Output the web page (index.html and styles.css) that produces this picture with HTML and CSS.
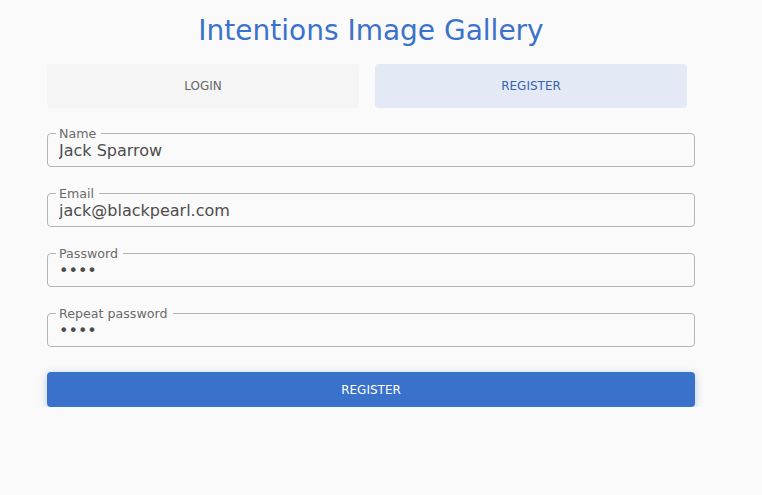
FILE: index.html
```html
<!DOCTYPE html>
<html lang="en">
<head>
<meta charset="utf-8">
<title>Intentions Image Gallery</title>
<link rel="stylesheet" href="styles.css">
</head>
<body>
<main class="page">
  <h1 class="title">Intentions Image Gallery</h1>
  <div class="tabs">
    <button class="tab" type="button">LOGIN</button>
    <button class="tab tab-active" type="button">REGISTER</button>
  </div>
  <form class="form">
    <fieldset class="field">
      <legend class="field-label">Name</legend>
      <input class="field-input" type="text" value="Jack Sparrow">
    </fieldset>
    <fieldset class="field">
      <legend class="field-label">Email</legend>
      <input class="field-input" type="email" value="jack@blackpearl.com">
    </fieldset>
    <fieldset class="field">
      <legend class="field-label">Password</legend>
      <input class="field-input" type="password" value="1234">
    </fieldset>
    <fieldset class="field">
      <legend class="field-label">Repeat password</legend>
      <input class="field-input" type="password" value="1234">
    </fieldset>
    <button class="submit" type="button">REGISTER</button>
  </form>
</main>
</body>
</html>
```

FILE: styles.css
```css
* {
  box-sizing: border-box;
}

html, body {
  margin: 0;
  padding: 0;
  background: #fafafa;
}

body {
  font-family: "DejaVu Sans", Verdana, sans-serif;
  color: #4d4d4d;
}

.page {
  width: 648px;
  margin-left: 47px;
  padding-top: 14px;
}

.title {
  margin: 0;
  font-size: 28px;
  line-height: 34px;
  font-weight: normal;
  text-align: center;
  color: #3b72cc;
}

.tabs {
  display: grid;
  grid-template-columns: 312px 312px;
  column-gap: 16px;
  margin-top: 16px;
}

.tab {
  height: 44px;
  border: none;
  border-radius: 4px;
  background: #f5f5f5;
  color: #666;
  font-family: inherit;
  font-size: 12px;
  padding: 0;
  cursor: pointer;
}

.tab-active {
  background: #e3eaf6;
  color: #3563ab;
}

.form {
  display: flex;
  flex-direction: column;
  gap: 20px;
  margin-top: 19px;
}

.field {
  margin: 0;
  min-width: 0;
  padding: 1px 8px 5px 8px;
  border: 1px solid #b5b5b5;
  border-radius: 4px;
}

.field-label {
  padding: 0 5px 0 3px;
  font-size: 12.65px;
  line-height: 13px;
  color: #6a6a6a;
}

.field-input {
  display: block;
  width: 100%;
  height: 20px;
  margin: 0;
  padding: 0 3px;
  border: none;
  outline: none;
  background: transparent;
  font-family: inherit;
  font-size: 16px;
  line-height: 20px;
  color: #4d4d4d;
}

.submit {
  margin-top: 5px;
  height: 35px;
  border: none;
  border-radius: 4px;
  background: #3a71cb;
  color: #fff;
  font-family: inherit;
  font-size: 12px;
  padding: 0;
  box-shadow: 0 2px 8px rgba(58, 113, 203, 0.35);
  cursor: pointer;
}
```
